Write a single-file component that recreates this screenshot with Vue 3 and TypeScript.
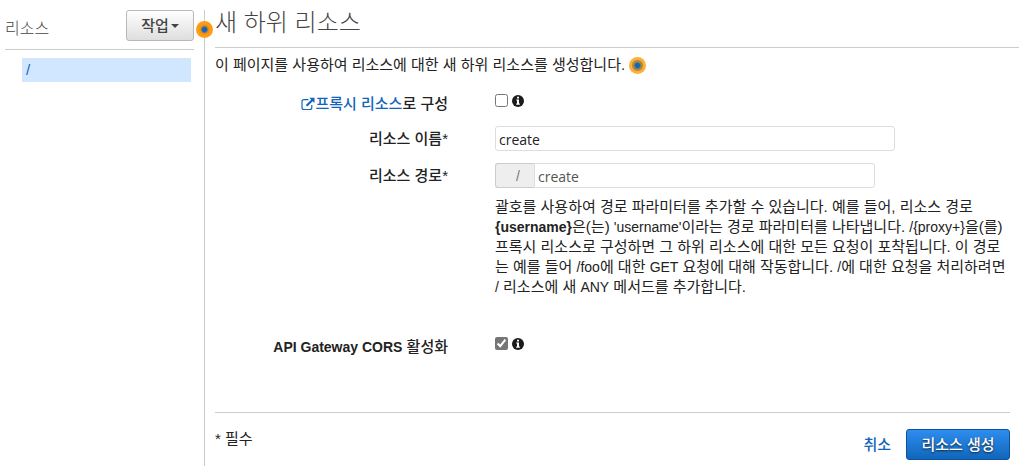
<script setup lang="ts">
import { ref } from 'vue'

const asProxy = ref(false)
const enableCors = ref(true)
const resourceName = ref('create')
const resourcePath = ref('create')
</script>

<template>
  <div class="page">
    <aside class="sidebar">
      <header class="side-head">
        <h2>리소스</h2>
        <button type="button" class="actions">작업<i class="caret"></i></button>
      </header>
      <a href="#" class="node">/</a>
    </aside>

    <main class="content">
      <i class="beacon edge"></i>
      <h1>새 하위 리소스</h1>
      <p class="intro">이 페이지를 사용하여 리소스에 대한 새 하위 리소스를 생성합니다.<i class="beacon soft"></i></p>

      <form class="form" @submit.prevent>
        <div class="row proxy">
          <div class="label">
            <a href="#"><svg class="ext" viewBox="0 0 14 14" aria-hidden="true"><path d="M7.5 2.7H3Q1 2.7 1 4.7V10.5Q1 12.5 3 12.5H8.8Q10.8 12.5 10.8 10.5V8" fill="none" stroke="currentColor" stroke-width="1.2" /><path d="M8.3 .7H13.5V6L11.7 4.2 6.3 9.6 4.8 8.1 10.2 2.7Z" fill="currentColor" /></svg>프록시 리소스</a><label for="proxy">로 구성</label>
          </div>
          <div class="check">
            <input id="proxy" v-model="asProxy" type="checkbox" />
            <svg class="info" viewBox="0 0 12 12" aria-hidden="true"><circle cx="6" cy="6" r="6" fill="#1b1b1b" /><path d="M5 1.8H7V3.4H5ZM4.2 4.5H7V8.6H7.8V9.8H4.2V8.6H5V5.6H4.2Z" fill="#fff" /></svg>
          </div>
        </div>

        <div class="row">
          <label class="label" for="name">리소스 이름*</label>
          <div class="field"><input id="name" v-model="resourceName" class="text" type="text" /></div>
        </div>

        <div class="row path">
          <label class="label" for="path">리소스 경로*</label>
          <div class="field">
            <div class="group"><span class="prefix">/</span><input id="path" v-model="resourcePath" class="text" type="text" /></div>
            <p class="help">
              괄호를 사용하여 경로 파라미터를 추가할 수 있습니다. 예를 들어, 리소스 경로<br />
              <b class="latin">{username}</b>은(는) <span class="latin">'username'</span>이라는 경로 파라미터를 나타냅니다. <span class="latin">/{proxy+}</span>을(를)<br />
              프록시 리소스로 구성하면 그 하위 리소스에 대한 모든 요청이 포착됩니다. 이 경로<br />
              는 예를 들어 <span class="latin">/foo</span>에 대한 <span class="latin">GET</span> 요청에 대해 작동합니다. <span class="latin">/</span>에 대한 요청을 처리하려면<br />
              <span class="latin">/</span> 리소스에 새 <span class="latin">ANY</span> 메서드를 추가합니다.
            </p>
          </div>
        </div>

        <div class="row cors">
          <label class="label" for="cors"><b class="latin">API Gateway CORS</b> 활성화</label>
          <div class="check">
            <input id="cors" v-model="enableCors" type="checkbox" />
            <svg class="info" viewBox="0 0 12 12" aria-hidden="true"><circle cx="6" cy="6" r="6" fill="#1b1b1b" /><path d="M5 1.8H7V3.4H5ZM4.2 4.5H7V8.6H7.8V9.8H4.2V8.6H5V5.6H4.2Z" fill="#fff" /></svg>
          </div>
        </div>

        <footer class="foot">
          <span class="required">* 필수</span>
          <button type="button" class="cancel">취소</button>
          <button type="submit" class="submit">리소스 생성</button>
        </footer>
      </form>
    </main>
  </div>
</template>

<style>
body {
  background: #fff;
}
</style>

<style scoped>
.page {
  box-sizing: border-box;
  display: flex;
  min-height: 100vh;
  padding-top: 10px;
  color: #222;
  font: 15px/20px "Liberation Sans", "Noto Sans CJK KR", sans-serif;
}
h1, h2, p {
  margin: 0;
  font-weight: 300;
}
a {
  color: #1166bb;
  text-decoration: none;
}
b {
  font-weight: 700;
}
button {
  font: inherit;
  cursor: pointer;
}
.sidebar {
  box-sizing: border-box;
  flex: none;
  width: 204px;
  padding: 0 10px 0 5px;
}
.side-head {
  display: flex;
  justify-content: space-between;
  align-items: center;
  padding-bottom: 8px;
  border-bottom: 1px solid #ccc;
}
.side-head h2 {
  padding-top: 6px;
  font-size: 16px;
  color: #444;
}
.actions {
  box-sizing: border-box;
  display: flex;
  align-items: center;
  justify-content: center;
  gap: 2px;
  width: 68px;
  height: 31px;
  padding: 0;
  border: 1px solid #b8b8b8;
  border-radius: 3px;
  background: linear-gradient(#fff, #dedede);
  color: #444;
  font-weight: 500;
}
.caret {
  border: 4px solid transparent;
  border-top-color: #444;
  border-bottom: 0;
}
.node {
  display: block;
  height: 20px;
  margin: 8px 3px 0 17px;
  padding: 2px 4px;
  background: #d0e7ff;
  line-height: 20px;
}
.content {
  position: relative;
  flex: 1;
  min-width: 0;
  border-left: 1px solid #ccc;
  padding-left: 10px;
}
.beacon {
  box-sizing: border-box;
  display: inline-block;
  width: 17px;
  height: 17px;
  border-radius: 50%;
  background: radial-gradient(circle, #1166bb 0 2px, #e58f19 4px, #ff9c14 6px);
}
.beacon.soft {
  margin-left: 4px;
  vertical-align: -4px;
  background: radial-gradient(circle, #1166bb 0 2px, #b38b3d 4px 5px, #ffae36 6px);
}
.edge {
  position: absolute;
  left: -9px;
  top: 11px;
}
h1 {
  padding-bottom: 11px;
  border-bottom: 1px solid #ccc;
  color: #444;
  font-size: 24px;
  line-height: 26px;
}
.intro {
  margin-top: 7px;
  font-weight: 400;
}
.form {
  margin-right: 9px;
}
.row {
  display: grid;
  grid-template-columns: 233px minmax(0, 1fr);
  column-gap: 47px;
}
.label {
  text-align: right;
  font-weight: 500;
  padding-top: 3px;
}
.latin {
  font-size: 14px;
}
.proxy {
  margin-top: 16px;
  margin-bottom: 12px;
}
.ext {
  width: 14px;
  height: 14px;
  vertical-align: -2px;
}
.check {
  display: flex;
  align-items: flex-start;
  gap: 4px;
  padding-top: 3px;
}
.check input {
  width: 13px;
  height: 13px;
  margin: 0;
  accent-color: #767676;
}
.info {
  width: 12px;
  height: 12px;
  margin-top: 1px;
}
.text {
  box-sizing: border-box;
  display: block;
  width: 400px;
  max-width: 100%;
  height: 25px;
  padding: 2px 3px 0;
  border: 1px solid #ddd;
  border-radius: 3px;
  color: #222;
  background: #fff;
  font: 14px "Open Sans", sans-serif;
}
.path {
  margin-top: 12px;
}
.group {
  display: flex;
  width: 380px;
  max-width: 100%;
}
.group .text {
  flex: 1;
  min-width: 0;
  border-radius: 0 3px 3px 0;
  color: #555;
}
.prefix {
  box-sizing: border-box;
  width: 39px;
  height: 25px;
  padding: 2px 14px;
  border: 1px solid #ccc;
  border-right: 0;
  border-radius: 3px 0 0 3px;
  background: #eee;
  color: #777;
  text-align: right;
  font-size: 14px;
}
.help {
  margin-top: 9px;
  font-weight: 400;
  white-space: nowrap;
}
.cors {
  margin-top: 37px;
}
.foot {
  display: flex;
  align-items: center;
  margin-top: 55px;
  padding-top: 16px;
  border-top: 1px solid #ccc;
}
.required {
  flex: 1;
  align-self: flex-start;
  font-weight: 400;
}
.cancel {
  margin-right: 15px;
  padding: 0;
  border: 0;
  background: none;
  color: #1166bb;
  font-weight: 500;
}
.submit {
  box-sizing: border-box;
  width: 104px;
  height: 31px;
  padding: 0;
  border: 1px solid #0d539b;
  border-radius: 3px;
  background: linear-gradient(#2e8def, #1166bb);
  color: #fff;
  font-weight: 500;
  text-shadow: 0 1px 2px #123;
}
</style>
